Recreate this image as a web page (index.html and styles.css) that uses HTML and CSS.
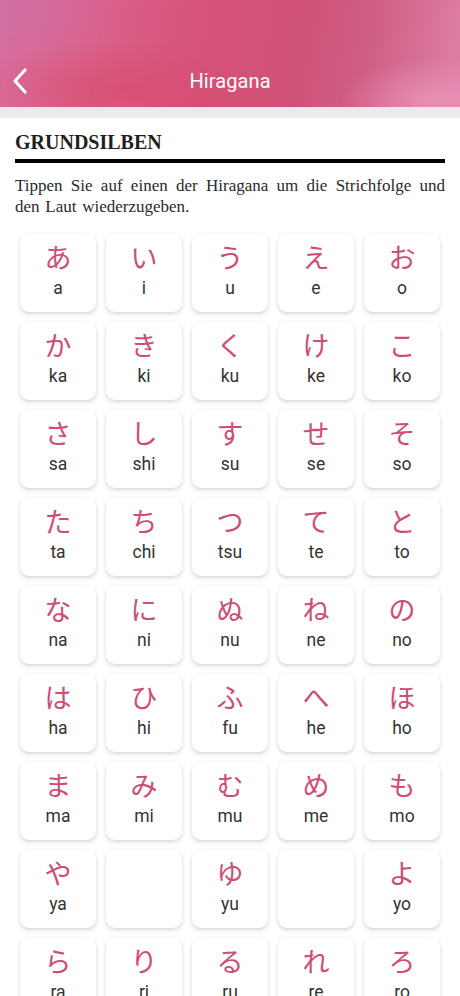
FILE: index.html
```html
<!DOCTYPE html>
<html lang="de">
<head>
<meta charset="utf-8">
<title>Hiragana</title>
<link rel="stylesheet" href="styles.css">
</head>
<body>
<header class="appbar">
  <div class="bar">
    <button class="back" aria-label="Zurück">
      <svg width="20" height="28" viewBox="0 0 20 28"><path d="M15 3 L5 14 L15 25" fill="none" stroke="#fff" stroke-width="3.2" stroke-linecap="round" stroke-linejoin="round"/></svg>
    </button>
    <h1 class="title">Hiragana</h1>
  </div>
</header>
<div class="band"></div>
<main class="card">
  <h2 class="heading">GRUNDSILBEN</h2>
  <p class="intro">Tippen Sie auf einen der Hiragana um die Strichfolge und den Laut wiederzugeben.</p>
  <div class="grid">
    <div class="tile"><span class="kana">あ</span><span class="roma">a</span></div>
    <div class="tile"><span class="kana">い</span><span class="roma">i</span></div>
    <div class="tile"><span class="kana">う</span><span class="roma">u</span></div>
    <div class="tile"><span class="kana">え</span><span class="roma">e</span></div>
    <div class="tile"><span class="kana">お</span><span class="roma">o</span></div>

    <div class="tile"><span class="kana">か</span><span class="roma">ka</span></div>
    <div class="tile"><span class="kana">き</span><span class="roma">ki</span></div>
    <div class="tile"><span class="kana">く</span><span class="roma">ku</span></div>
    <div class="tile"><span class="kana">け</span><span class="roma">ke</span></div>
    <div class="tile"><span class="kana">こ</span><span class="roma">ko</span></div>

    <div class="tile"><span class="kana">さ</span><span class="roma">sa</span></div>
    <div class="tile"><span class="kana">し</span><span class="roma">shi</span></div>
    <div class="tile"><span class="kana">す</span><span class="roma">su</span></div>
    <div class="tile"><span class="kana">せ</span><span class="roma">se</span></div>
    <div class="tile"><span class="kana">そ</span><span class="roma">so</span></div>

    <div class="tile"><span class="kana">た</span><span class="roma">ta</span></div>
    <div class="tile"><span class="kana">ち</span><span class="roma">chi</span></div>
    <div class="tile"><span class="kana">つ</span><span class="roma">tsu</span></div>
    <div class="tile"><span class="kana">て</span><span class="roma">te</span></div>
    <div class="tile"><span class="kana">と</span><span class="roma">to</span></div>

    <div class="tile"><span class="kana">な</span><span class="roma">na</span></div>
    <div class="tile"><span class="kana">に</span><span class="roma">ni</span></div>
    <div class="tile"><span class="kana">ぬ</span><span class="roma">nu</span></div>
    <div class="tile"><span class="kana">ね</span><span class="roma">ne</span></div>
    <div class="tile"><span class="kana">の</span><span class="roma">no</span></div>

    <div class="tile"><span class="kana">は</span><span class="roma">ha</span></div>
    <div class="tile"><span class="kana">ひ</span><span class="roma">hi</span></div>
    <div class="tile"><span class="kana">ふ</span><span class="roma">fu</span></div>
    <div class="tile"><span class="kana">へ</span><span class="roma">he</span></div>
    <div class="tile"><span class="kana">ほ</span><span class="roma">ho</span></div>

    <div class="tile"><span class="kana">ま</span><span class="roma">ma</span></div>
    <div class="tile"><span class="kana">み</span><span class="roma">mi</span></div>
    <div class="tile"><span class="kana">む</span><span class="roma">mu</span></div>
    <div class="tile"><span class="kana">め</span><span class="roma">me</span></div>
    <div class="tile"><span class="kana">も</span><span class="roma">mo</span></div>

    <div class="tile"><span class="kana">や</span><span class="roma">ya</span></div>
    <div class="tile empty"></div>
    <div class="tile"><span class="kana">ゆ</span><span class="roma">yu</span></div>
    <div class="tile empty"></div>
    <div class="tile"><span class="kana">よ</span><span class="roma">yo</span></div>

    <div class="tile"><span class="kana">ら</span><span class="roma">ra</span></div>
    <div class="tile"><span class="kana">り</span><span class="roma">ri</span></div>
    <div class="tile"><span class="kana">る</span><span class="roma">ru</span></div>
    <div class="tile"><span class="kana">れ</span><span class="roma">re</span></div>
    <div class="tile"><span class="kana">ろ</span><span class="roma">ro</span></div>

    <div class="tile"><span class="kana">わ</span><span class="roma">wa</span></div>
    <div class="tile empty"></div>
    <div class="tile empty"></div>
    <div class="tile empty"></div>
    <div class="tile"><span class="kana">を</span><span class="roma">wo</span></div>
  </div>
</main>
</body>
</html>
```

FILE: styles.css
```css
* { box-sizing: border-box; }

html, body {
  margin: 0;
  padding: 0;
  background: #ffffff;
}

body {
  font-family: "Liberation Sans", Arial, sans-serif;
  width: 460px;
}

.appbar {
  height: 107px;
  padding-top: 56px;
  background:
    radial-gradient(ellipse 120px 60px at 20px 10px, rgba(200, 110, 170, 0.45), rgba(200, 110, 170, 0) 100%),
    radial-gradient(ellipse 90px 40px at 430px 100px, rgba(240, 160, 195, 0.6), rgba(240, 160, 195, 0) 100%),
    radial-gradient(ellipse 160px 50px at 120px 90px, rgba(214, 70, 100, 0.5), rgba(214, 70, 100, 0) 100%),
    linear-gradient(100deg, #d870a0 0%, #da6088 22%, #d6527a 45%, #cf5278 65%, #d06086 80%, #e081a8 100%);
}

.bar {
  height: 48px;
  display: flex;
  align-items: center;
  justify-content: center;
  position: relative;
}

.back {
  position: absolute;
  left: 6px;
  top: 10px;
  width: 28px;
  height: 30px;
  padding: 0;
  border: 0;
  background: none;
  display: flex;
  align-items: center;
  justify-content: center;
}

.title {
  margin: 0;
  font-family: Roboto, "Liberation Sans", sans-serif;
  font-weight: 400;
  font-size: 20px;
  color: #ffffff;
  letter-spacing: 0.1px;
  padding-top: 2px;
}

.band {
  height: 11px;
  background: #ebebef;
}

.card {
  background: #ffffff;
  padding: 12px 15px 20px;
  border-radius: 6px 6px 0 0;
}

.heading {
  margin: 0;
  font-family: "Liberation Serif", "Times New Roman", serif;
  font-weight: 700;
  font-size: 20px;
  line-height: 24px;
  color: #1f1f1f;
  padding-bottom: 5px;
  border-bottom: 4px solid #000000;
}

.intro {
  margin: 12px 0 16px;
  font-family: "Liberation Serif", "Times New Roman", serif;
  font-size: 17px;
  line-height: 21px;
  word-spacing: 1.5px;
  color: #2a2a2a;
  text-align: justify;
}

.grid {
  display: grid;
  grid-template-columns: repeat(5, 76px);
  grid-auto-rows: 79px;
  column-gap: 10px;
  row-gap: 9px;
  padding: 0 5px;
}

.tile {
  background: #ffffff;
  border-radius: 9px;
  box-shadow: 0 2px 4px rgba(0, 0, 0, 0.16), 0 0 1px rgba(0, 0, 0, 0.06);
  display: flex;
  flex-direction: column;
  align-items: center;
  padding-top: 8px;
}

.kana {
  font-family: "Noto Sans CJK JP", "Noto Sans CJK SC", sans-serif;
  font-size: 27px;
  line-height: 32px;
  color: #cf4c77;
}

.roma {
  margin-top: 5px;
  font-family: Roboto, "Liberation Sans", sans-serif;
  font-size: 17.5px;
  line-height: 20px;
  color: #333333;
}
```
